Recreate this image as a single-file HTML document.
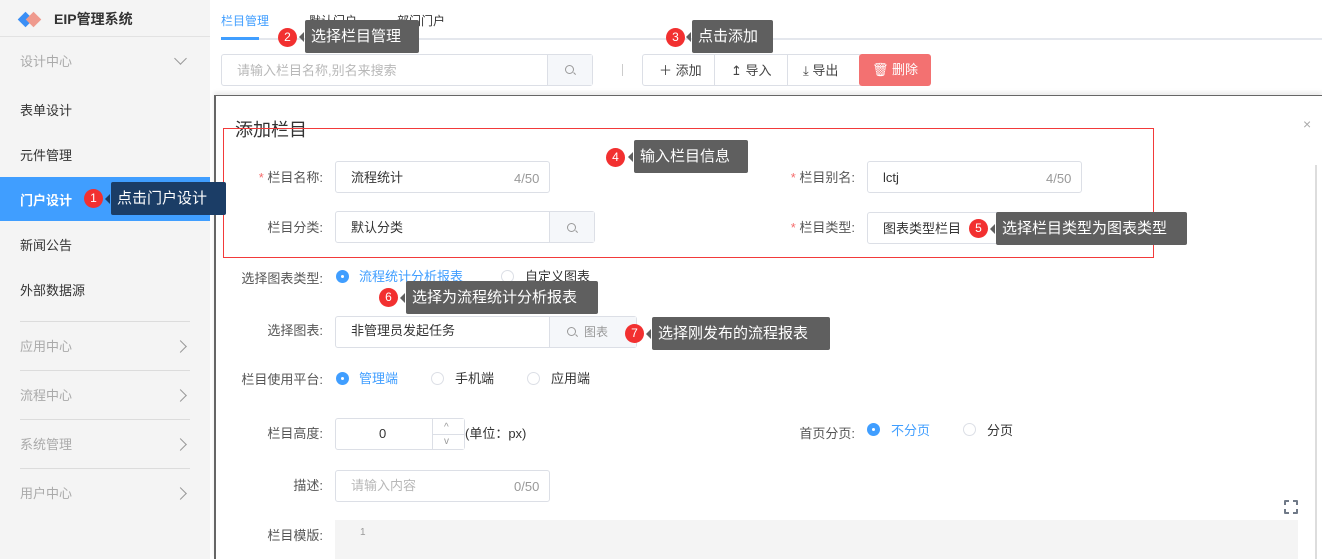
<!DOCTYPE html>
<html><head><meta charset="utf-8"><style>
*{box-sizing:border-box;margin:0;padding:0}
body{width:1322px;height:559px;overflow:hidden;background:#fff;font-family:"Liberation Sans","Noto Sans CJK SC",sans-serif;font-size:13px;line-height:15px;color:#333;position:relative}
.a{position:absolute;white-space:nowrap}
.side{left:0;top:0;width:210px;height:559px;background:#f4f4f4}
.sd{position:absolute;left:20px;width:170px;height:1px;background:#dcdcdc}
.gray{color:#aaa}
.chev{position:absolute;left:176px;width:9px;height:9px;border-right:1.5px solid #999;border-bottom:1.5px solid #999;transform:rotate(-45deg)}
.inp{position:absolute;border:1px solid #dcdfe6;border-radius:3px;background:#fff;height:32px}
.lbl{position:absolute;text-align:right;color:#555}
.req{color:#f56c6c}
.radio{position:absolute;width:13px;height:13px;border-radius:50%;border:1px solid #dcdfe6;background:#fff}
.radio.on{background:#409eff;border-color:#409eff}
.radio.on:after{content:"";position:absolute;left:4px;top:4px;width:3px;height:3px;border-radius:50%;background:#fff}
.tip{position:absolute;background:#5f5f5f;color:#fff;font-size:15px;height:33px;line-height:33px;padding-left:6px;border-radius:2px;white-space:nowrap}
.tip:before{content:"";position:absolute;left:-6px;top:12px;border:5px solid transparent;border-right-color:inherit;border-left:0;}
.bd{position:absolute;width:19px;height:19px;border-radius:50%;background:#f23030;color:#fff;font-size:12px;line-height:19px;text-align:center}
.srch{position:absolute;width:9px;height:9px;border:1.3px solid #999;border-radius:50%}
.srch:after{content:"";position:absolute;left:7px;top:7px;width:3px;height:1.3px;background:#999;transform:rotate(45deg)}
</style></head><body>
<div class="a side"></div>
<svg class="a" style="left:17px;top:11px" width="26" height="17"><rect x="3" y="3" width="11" height="11" transform="rotate(45 8.5 8.5)" fill="#3b8ff5"/><rect x="11" y="3" width="11" height="11" transform="rotate(45 16.5 8.5)" fill="#ef9a8e"/></svg>
<div class="a" style="left:54px;top:12px;font-size:14px;font-weight:bold;color:#333">EIP管理系统</div>
<div class="a" style="left:0;top:36px;width:210px;height:1px;background:#e2e2e2"></div>
<div class="a gray" style="left:20px;top:54px">设计中心</div>
<div class="chev" style="top:54px;transform:rotate(45deg)"></div>
<div class="a" style="left:20px;top:103px">表单设计</div>
<div class="a" style="left:20px;top:148px">元件管理</div>
<div class="a" style="left:0;top:177px;width:210px;height:44px;background:#409eff"></div>
<div class="a" style="left:20px;top:193px;color:#fff;font-weight:bold">门户设计</div>
<div class="a" style="left:20px;top:238px">新闻公告</div>
<div class="a" style="left:20px;top:283px">外部数据源</div>
<div class="sd" style="top:321px"></div><div class="sd" style="top:370px"></div><div class="sd" style="top:419px"></div><div class="sd" style="top:468px"></div>
<div class="a gray" style="left:20px;top:339px">应用中心</div><div class="chev" style="top:342px"></div>
<div class="a gray" style="left:20px;top:388px">流程中心</div><div class="chev" style="top:391px"></div>
<div class="a gray" style="left:20px;top:437px">系统管理</div><div class="chev" style="top:440px"></div>
<div class="a gray" style="left:20px;top:486px">用户中心</div><div class="chev" style="top:489px"></div>

<div class="a" style="left:221px;top:14px;font-size:12px;color:#409eff">栏目管理</div>
<div class="a" style="left:309px;top:14px;font-size:12px">默认门户</div>
<div class="a" style="left:397px;top:14px;font-size:12px">部门门户</div>
<div class="a" style="left:221px;top:38px;width:1101px;height:2px;background:#e4e7ed"></div>
<div class="a" style="left:221px;top:37px;width:38px;height:3px;background:#409eff"></div>
<div class="inp" style="left:221px;top:54px;width:372px"></div>
<div class="a" style="left:547px;top:55px;width:45px;height:30px;background:#f5f7fa;border-left:1px solid #dcdfe6"></div>
<div class="srch" style="left:565px;top:65px"></div>
<div class="a" style="left:237px;top:63px;color:#b8b8b8">请输入栏目名称,别名来搜索</div>
<div class="a" style="left:622px;top:64px;width:1px;height:12px;background:#ccc"></div>
<div class="inp" style="left:642px;top:54px;width:220px"></div>
<div class="a" style="left:714px;top:55px;width:1px;height:30px;background:#dcdfe6"></div>
<div class="a" style="left:787px;top:55px;width:1px;height:30px;background:#dcdfe6"></div>
<div class="a" style="left:659px;top:63px;color:#444">＋ 添加</div>
<div class="a" style="left:731px;top:63px;color:#444">↥ 导入</div>
<div class="a" style="left:803px;top:63px;color:#444">⤓ 导出</div>
<div class="a" style="left:859px;top:54px;width:72px;height:32px;background:#f37171;border-radius:3px;color:#fff;text-align:center;line-height:32px">🗑 删除</div>

<div class="a" style="left:214px;top:95px;width:1108px;height:464px;background:#fff;border-top:1px solid #666;border-left:2px solid #666;box-shadow:0 -3px 4px rgba(0,0,0,.08)"></div>
<div class="a" style="left:1315px;top:165px;width:2px;height:394px;background:#ddd"></div>
<div class="a" style="left:235px;top:119px;font-size:18px;line-height:22px;color:#333">添加栏目</div>
<div class="a" style="left:1303px;top:117px;font-size:14px;color:#aaa">×</div>
<div class="a" style="left:223px;top:128px;width:931px;height:130px;border:1px solid #f23a3a"></div>

<div class="lbl" style="left:223px;top:170px;width:100px"><span class="req">* </span>栏目名称:</div>
<div class="inp" style="left:335px;top:161px;width:215px"></div>
<div class="a" style="left:351px;top:170px">流程统计</div><div class="a" style="left:514px;top:171px;color:#999">4/50</div>
<div class="lbl" style="left:223px;top:220px;width:100px">栏目分类:</div>
<div class="inp" style="left:335px;top:211px;width:260px"></div>
<div class="a" style="left:549px;top:212px;width:45px;height:30px;background:#f5f7fa;border-left:1px solid #dcdfe6"></div>
<div class="srch" style="left:567px;top:223px"></div>
<div class="a" style="left:351px;top:220px">默认分类</div>
<div class="lbl" style="left:755px;top:170px;width:100px"><span class="req">* </span>栏目别名:</div>
<div class="inp" style="left:867px;top:161px;width:215px"></div>
<div class="a" style="left:883px;top:170px">lctj</div><div class="a" style="left:1046px;top:171px;color:#999">4/50</div>
<div class="lbl" style="left:755px;top:220px;width:100px"><span class="req">* </span>栏目类型:</div>
<div class="inp" style="left:867px;top:212px;width:182px"></div>
<div class="a" style="left:883px;top:221px">图表类型栏目</div>

<div class="lbl" style="left:213px;top:271px;width:110px">选择图表类型:</div>
<div class="radio on" style="left:336px;top:270px"></div><div class="a" style="left:359px;top:269px;color:#409eff">流程统计分析报表</div>
<div class="radio" style="left:501px;top:270px"></div><div class="a" style="left:525px;top:269px">自定义图表</div>
<div class="lbl" style="left:223px;top:323px;width:100px">选择图表:</div>
<div class="inp" style="left:335px;top:316px;width:302px"></div>
<div class="a" style="left:549px;top:317px;width:87px;height:30px;background:#f5f7fa;border-left:1px solid #dcdfe6"></div>
<div class="srch" style="left:567px;top:327px"></div><div class="a" style="left:584px;top:325px;font-size:12px;color:#999">图表</div>
<div class="a" style="left:351px;top:323px">非管理员发起任务</div>
<div class="lbl" style="left:213px;top:372px;width:110px">栏目使用平台:</div>
<div class="radio on" style="left:336px;top:372px"></div><div class="a" style="left:359px;top:371px;color:#409eff">管理端</div>
<div class="radio" style="left:431px;top:372px"></div><div class="a" style="left:455px;top:371px">手机端</div>
<div class="radio" style="left:527px;top:372px"></div><div class="a" style="left:551px;top:371px">应用端</div>
<div class="lbl" style="left:223px;top:426px;width:100px">栏目高度:</div>
<div class="inp" style="left:335px;top:418px;width:130px"></div>
<div class="a" style="left:432px;top:419px;width:32px;height:30px;border-left:1px solid #dcdfe6;background:#fff"></div>
<div class="a" style="left:433px;top:434px;width:31px;height:1px;background:#dcdfe6"></div>
<div class="a" style="left:444px;top:420px;font-size:10px;color:#999">^</div>
<div class="a" style="left:444px;top:434px;font-size:10px;color:#999">v</div>
<div class="a" style="left:379px;top:426px">0</div>
<div class="a" style="left:465px;top:426px">(单位：px)</div>
<div class="lbl" style="left:755px;top:426px;width:100px">首页分页:</div>
<div class="radio on" style="left:867px;top:423px"></div><div class="a" style="left:891px;top:423px;color:#409eff">不分页</div>
<div class="radio" style="left:963px;top:423px"></div><div class="a" style="left:987px;top:423px">分页</div>
<div class="lbl" style="left:223px;top:478px;width:100px">描述:</div>
<div class="inp" style="left:335px;top:470px;width:215px"></div>
<div class="a" style="left:351px;top:478px;color:#b8b8b8">请输入内容</div><div class="a" style="left:514px;top:479px;color:#999">0/50</div>
<div class="lbl" style="left:223px;top:528px;width:100px">栏目模版:</div>
<div class="a" style="left:335px;top:520px;width:963px;height:39px;background:#f4f4f4"></div>
<div class="a" style="left:360px;top:525px;font-size:10px;color:#999">1</div>
<div class="a" style="left:1284px;top:500px;width:14px;height:14px;border:2px solid #707a88;border-radius:1px;background:#fff"></div>
<div class="a" style="left:1289px;top:500px;width:4px;height:14px;background:#fff"></div>
<div class="a" style="left:1284px;top:505px;width:14px;height:4px;background:#fff"></div>

<div class="bd" style="left:84px;top:189px">1</div>
<div class="tip" style="left:111px;top:182px;width:115px;background:#1b3d66;border-right-color:#1b3d66">点击门户设计</div>
<div class="bd" style="left:278px;top:28px">2</div>
<div class="tip" style="left:305px;top:20px;width:114px;border-right-color:#5f5f5f">选择栏目管理</div>
<div class="bd" style="left:666px;top:28px">3</div>
<div class="tip" style="left:692px;top:20px;width:81px;border-right-color:#5f5f5f">点击添加</div>
<div class="bd" style="left:606px;top:148px">4</div>
<div class="tip" style="left:634px;top:140px;width:114px;border-right-color:#5f5f5f">输入栏目信息</div>
<div class="bd" style="left:969px;top:219px">5</div>
<div class="tip" style="left:996px;top:212px;width:191px;border-right-color:#5f5f5f">选择栏目类型为图表类型</div>
<div class="bd" style="left:379px;top:288px">6</div>
<div class="tip" style="left:406px;top:281px;width:192px;border-right-color:#5f5f5f">选择为流程统计分析报表</div>
<div class="bd" style="left:625px;top:324px">7</div>
<div class="tip" style="left:652px;top:317px;width:178px;border-right-color:#5f5f5f">选择刚发布的流程报表</div>
</body></html>
